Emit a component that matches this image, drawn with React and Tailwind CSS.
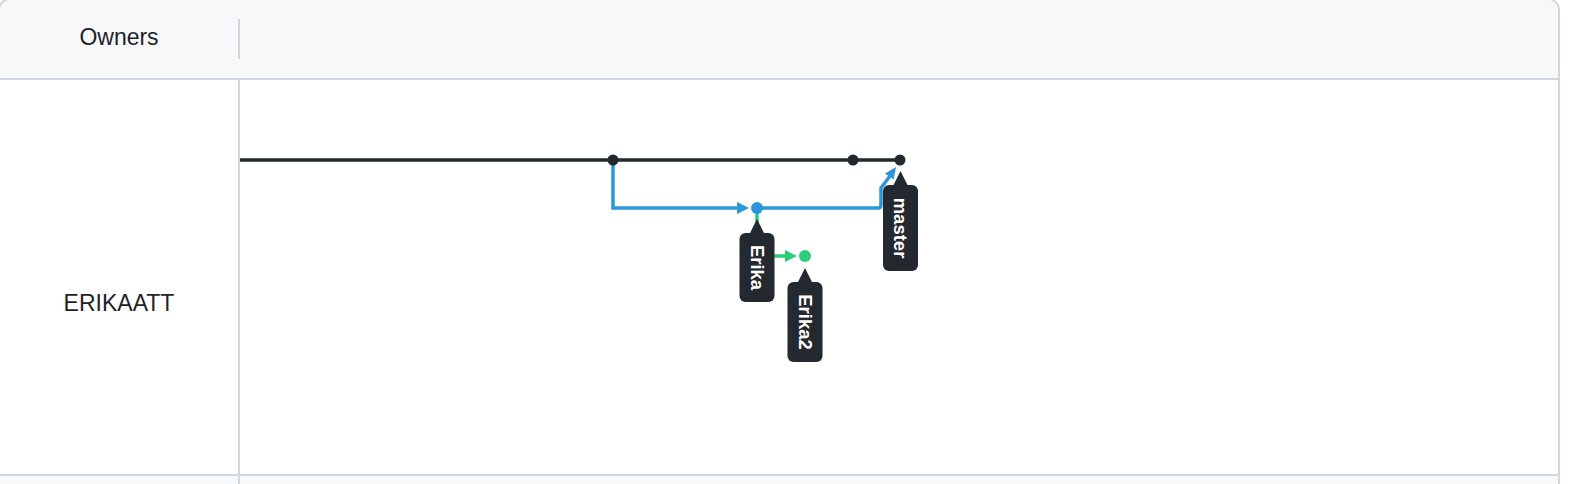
import React from 'react';

const BLACK = '#24292f';
const BLUE = '#2b96da';
const GREEN = '#2ccc7a';

const labels = [
  { text: 'Erika', cx: 517, tip: 139, top: 153, bottom: 222 },
  { text: 'master', cx: 660.5, tip: 91, top: 105, bottom: 191 },
  { text: 'Erika2', cx: 565, tip: 188, top: 202, bottom: 282 },
];

const BranchLabel = ({ text, cx, tip, top, bottom }) => {
  const mid = (top + bottom) / 2;
  return (
    <g>
      <polygon points={`${cx},${tip} ${cx - 8},${top + 2} ${cx + 8},${top + 2}`} fill={BLACK} />
      <rect x={cx - 17.5} y={top} width="35" height={bottom - top} rx="6" fill={BLACK} />
      <text
        transform={`translate(${cx} ${mid}) rotate(90)`}
        textAnchor="middle"
        dominantBaseline="central"
        fill="#ffffff"
        fontFamily="'Liberation Sans', Arial, sans-serif"
        fontWeight="700"
        fontSize="18.5"
      >
        {text}
      </text>
    </g>
  );
};

const NetworkGraph = () => (
  <svg width="1318" height="394" viewBox="0 0 1318 394" className="block">
    {/* master line */}
    <line x1="0" y1="80" x2="660" y2="80" stroke={BLACK} strokeWidth="3.5" />

    {/* Erika branch */}
    <path d="M 373 80 V 128 H 499" fill="none" stroke={BLUE} strokeWidth="3.5" />
    <polygon points="509,128 497,122 497,134" fill={BLUE} />
    <path d="M 517 128 H 638 Q 641 128 641 125 V 108 L 650 96" fill="none" stroke={BLUE} strokeWidth="3.5" />
    <polygon points="656,87 653.6,99.4 645,93.4" fill={BLUE} />

    {/* Erika2 branch */}
    <path d="M 517 128 V 176 H 547" fill="none" stroke={GREEN} strokeWidth="3.5" />
    <polygon points="557,176 545,170 545,182" fill={GREEN} />

    {/* commits */}
    <circle cx="373" cy="80" r="5.5" fill={BLACK} />
    <circle cx="613" cy="80" r="5.5" fill={BLACK} />
    <circle cx="660" cy="80" r="5.5" fill={BLACK} />
    <circle cx="517" cy="128" r="6" fill={BLUE} />
    <circle cx="565" cy="176" r="6" fill={GREEN} />

    {labels.map((l) => (
      <BranchLabel key={l.text} {...l} />
    ))}
  </svg>
);

export default function App() {
  return (
    <div className="w-[1576px] h-[484px] bg-white overflow-hidden text-[#1f2328] font-['Liberation_Sans',Arial,sans-serif]">
      <div className="ml-[-2px] mt-[-2px] w-[1562px] border-2 border-[#d0d7de] rounded-t-xl overflow-hidden">
        <div className="flex h-[80px] bg-[#f6f8fa] border-b-2 border-[#d0d7de]">
          <div className="w-[238px] flex items-center justify-center pb-[3px] text-[23px]">Owners</div>
          <div className="w-[2px] h-[40px] self-center bg-[#d0d7de]"></div>
          <div className="flex-1"></div>
        </div>

        <div className="flex h-[396px] border-b-2 border-[#d0d7de]">
          <div className="w-[240px] border-r-2 border-[#d0d7de] flex justify-center pt-[206px] text-[23px]">
            ERIKAATT
          </div>
          <div className="flex-1">
            <NetworkGraph />
          </div>
        </div>

        <div className="flex h-[40px] bg-[#f6f8fa]">
          <div className="w-[240px] border-r-2 border-[#d0d7de]"></div>
          <div className="flex-1"></div>
        </div>
      </div>
    </div>
  );
}
